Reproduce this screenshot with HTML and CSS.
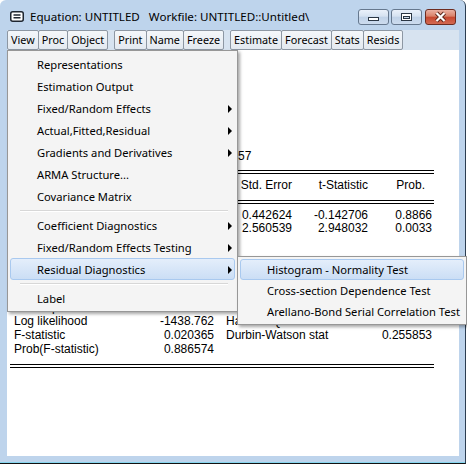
FILE: index.html
```html
<!DOCTYPE html>
<html>
<head>
<meta charset="utf-8">
<link rel="stylesheet" href="styles.css">
</head>
<body>
<div class="window">
  <div class="titlebar">
    <svg class="appicon" width="14" height="11" viewBox="0 0 14 11">
      <rect x="0.75" y="0.75" width="12.5" height="9.5" rx="2" fill="#fff" stroke="#1e2630" stroke-width="1.5"/>
      <path d="M3.5 4 H10.5 M3.5 6.8 H10.5" stroke="#1e2630" stroke-width="1.5"/>
    </svg>
    <span class="title">Equation: UNTITLED&nbsp;&nbsp; Workfile: UNTITLED::Untitled\</span>
    <div class="caption">
      <div class="cbtn">
        <svg width="29" height="14" viewBox="0 0 29 14"><rect x="9.5" y="7.5" width="10" height="3" fill="#fff" stroke="#2b3644"/></svg>
      </div>
      <div class="cbtn">
        <svg width="29" height="14" viewBox="0 0 29 14"><rect x="9.5" y="3.5" width="10" height="7" fill="#fff" stroke="#2b3644"/><rect x="11.5" y="6.5" width="6" height="2" fill="#c9d8ea" stroke="#2b3644"/></svg>
      </div>
      <div class="cbtn close">
        <svg width="29" height="14" viewBox="0 0 29 14"><path d="M10.5 3 L18.5 11 M18.5 3 L10.5 11" stroke="#5a2418" stroke-width="4"/><path d="M10.5 3 L18.5 11 M18.5 3 L10.5 11" stroke="#fff" stroke-width="2.2"/></svg>
      </div>
    </div>
  </div>
  <div class="toolbar">
    <div class="tgroup"><span class="tb">View</span><span class="tb">Proc</span><span class="tb">Object</span></div>
    <div class="tgroup"><span class="tb">Print</span><span class="tb">Name</span><span class="tb">Freeze</span></div>
    <div class="tgroup"><span class="tb">Estimate</span><span class="tb">Forecast</span><span class="tb">Stats</span><span class="tb">Resids</span></div>
  </div>
  <div class="content">
    <div class="output">
      <div class="line">Dependent Variable: Y</div>
      <div class="line">Method: Panel Least Squares</div>
      <div class="line">Date: 05/14/15&nbsp;&nbsp; Time: 10:21</div>
      <div class="line">Sample: 1984 2014</div>
      <div class="line">Periods included: 31</div>
      <div class="line">Cross-sections included: 47</div>
      <div class="line"><span class="obs-label">Total panel (balanced) observations:</span>1457</div>
      <div class="dbl d1"></div>
      <div class="coef head"><span class="lbl">Variable</span><span>Coefficient</span><span>Std. Error</span><span>t-Statistic</span><span class="prob">Prob.</span></div>
      <div class="dbl d2"></div>
      <div class="coef row first"><span class="lbl">X</span><span>-0.063166</span><span>0.442624</span><span>-0.142706</span><span>0.8866</span></div>
      <div class="coef row"><span class="lbl">C</span><span>7.548553</span><span>2.560539</span><span>2.948032</span><span>0.0033</span></div>
      <div class="stats">
        <span class="lbl">R-squared</span><span>0.000014</span><span class="lbl2">Mean dependent var</span><span>7.530541</span>
        <span class="lbl">Adjusted R-squared</span><span>-0.000673</span><span class="lbl2">S.D. dependent var</span><span>15.44931</span>
        <span class="lbl">S.E. of regression</span><span>15.45451</span><span class="lbl2">Akaike info criterion</span><span>1.977711</span>
        <span class="lbl">Sum squared resid</span><span>347514.3</span><span class="lbl2">Schwarz criterion</span><span>1.984962</span>
        <span class="lbl">Log likelihood</span><span>-1438.762</span><span class="lbl2">Hannan-Quinn criter.</span><span>1.980416</span>
        <span class="lbl">F-statistic</span><span>0.020365</span><span class="lbl2">Durbin-Watson stat</span><span>0.255853</span>
        <span class="lbl">Prob(F-statistic)</span><span>0.886574</span><span class="lbl2"></span><span></span>
      </div>
      <div class="dbl d3"></div>
    </div>

    <div class="menu main">
      <div class="mi">Representations</div>
      <div class="mi">Estimation Output</div>
      <div class="mi sub-arrow">Fixed/Random Effects</div>
      <div class="mi sub-arrow">Actual,Fitted,Residual</div>
      <div class="mi sub-arrow">Gradients and Derivatives</div>
      <div class="mi">ARMA Structure...</div>
      <div class="mi">Covariance Matrix</div>
      <div class="sep"></div>
      <div class="mi sub-arrow">Coefficient Diagnostics</div>
      <div class="mi sub-arrow">Fixed/Random Effects Testing</div>
      <div class="mi sub-arrow hl">Residual Diagnostics</div>
      <div class="sep"></div>
      <div class="mi">Label</div>
    </div>

    <div class="menu submenu">
      <div class="mi hl">Histogram - Normality Test</div>
      <div class="mi">Cross-section Dependence Test</div>
      <div class="mi">Arellano-Bond Serial Correlation Test</div>
    </div>
  </div>
</div>
</body>
</html>
```

FILE: styles.css
```css
* { box-sizing: border-box; }
html, body { margin: 0; padding: 0; background: #fff; }
body { width: 467px; height: 467px; overflow: hidden; font-family: "Noto Sans", sans-serif; color: #000; }

.window {
  width: 466px;
  height: 464px;
  background: #bed4ec;
  border-right: 1px solid #2c3e52;
  border-bottom: 1px solid #111;
  box-shadow: inset 0 -1px 0 #86d6ef;
  border-top-left-radius: 6px;
  border-top-right-radius: 6px;
  display: flex;
  flex-direction: column;
  padding: 0 6px 7px 7px;
}

/* title bar */
.titlebar { height: 30px; display: flex; align-items: flex-start; flex: none; }
.appicon { margin: 11px 0 0 3px; flex: none; }
.title { margin: 9px 0 0 6px; font-size: 11.6px; line-height: 16px; white-space: nowrap; }
.caption { margin: 9px 3px 0 auto; display: flex; gap: 2px; }
.cbtn {
  width: 31px; height: 16px;
  border: 1px solid #66788e;
  border-radius: 3px;
  background: linear-gradient(#eaf1fa 0%, #d6e2f1 45%, #c0d2e8 50%, #cddcee 100%);
  display: flex; align-items: center; justify-content: center;
}
.cbtn.close {
  margin-left: 1px;
  border-color: #6e2c20;
  background: linear-gradient(#eab0a2 0%, #d98169 45%, #c6472f 50%, #d36a52 100%);
}

/* toolbar */
.toolbar { height: 20px; flex: none; display: flex; background: #d7e3f0; }
.tgroup { display: flex; margin-right: 6px; }
.tb {
  font-size: 10.8px;
  line-height: 18px;
  padding: 0 3px;
  border: 1px solid #8d97a3;
  border-radius: 2px;
  background: linear-gradient(#f4f7fa, #e3e9f0);
  white-space: nowrap;
}
.tb + .tb { margin-left: -1px; }

/* content */
.content { flex: 1; background: #fff; position: relative; }

.output { padding: 15px 0 0 3px; font-family: "Liberation Sans", Arial, sans-serif; font-size: 12px; }
.line { height: 14px; line-height: 14px; padding-left: 4px; white-space: nowrap; }
.obs-label { display: inline-block; width: 210.7px; }

.dbl { width: 424px; height: 4px; border-top: 1px solid #000; border-bottom: 1px solid #000; }
.d1 { margin-top: 7px; }
.d2 { margin-top: 8px; }
.d3 { margin-top: 8px; }

.coef { display: grid; grid-template-columns: 140px 64px 78px 76px 64px; text-align: right; white-space: nowrap; }
.coef .lbl { text-align: left; padding-left: 4px; }
.head { height: 14px; line-height: 14px; margin-top: 4px; }
.head .prob { padding-right: 7px; }
.row { height: 13px; line-height: 13px; }
.row.first { margin-top: 5px; }

.stats { display: grid; grid-template-columns: 140px 64px 146px 72px; grid-auto-rows: 14px; line-height: 14px; margin-top: 23px; text-align: right; white-space: nowrap; }
.stats .lbl { text-align: left; padding-left: 4px; }
.stats .lbl2 { text-align: left; padding-left: 12px; }

/* menus */
.menu {
  position: absolute;
  background: #f4f4f4;
  border: 1px solid #979797;
  padding: 2px;
  box-shadow: 2px 2px 3px rgba(0, 0, 0, 0.35);
  font-size: 11.2px;
}
.menu.main { left: 0; top: 0; width: 231px; }
.menu.submenu { left: 230px; top: 206px; width: 230px; }
.mi { height: 22px; display: flex; align-items: center; padding-left: 26px; position: relative; white-space: nowrap; border: 1px solid transparent; border-radius: 3px; }
.submenu .mi { height: 21px; }
.mi.hl { border-color: #a9c9ef; background: linear-gradient(#e4eefb, #cbdef5); }
.sub-arrow::after {
  content: "";
  position: absolute;
  right: 2px;
  top: 7px;
  border-left: 4px solid #000;
  border-top: 4px solid transparent;
  border-bottom: 4px solid transparent;
}
.sep { height: 7px; margin: 0 7px 0 10px; display: flex; align-items: center; }
.sep::before { content: ""; display: block; width: 100%; border-top: 1px solid #d7d7d7; border-bottom: 1px solid #fff; }
```
